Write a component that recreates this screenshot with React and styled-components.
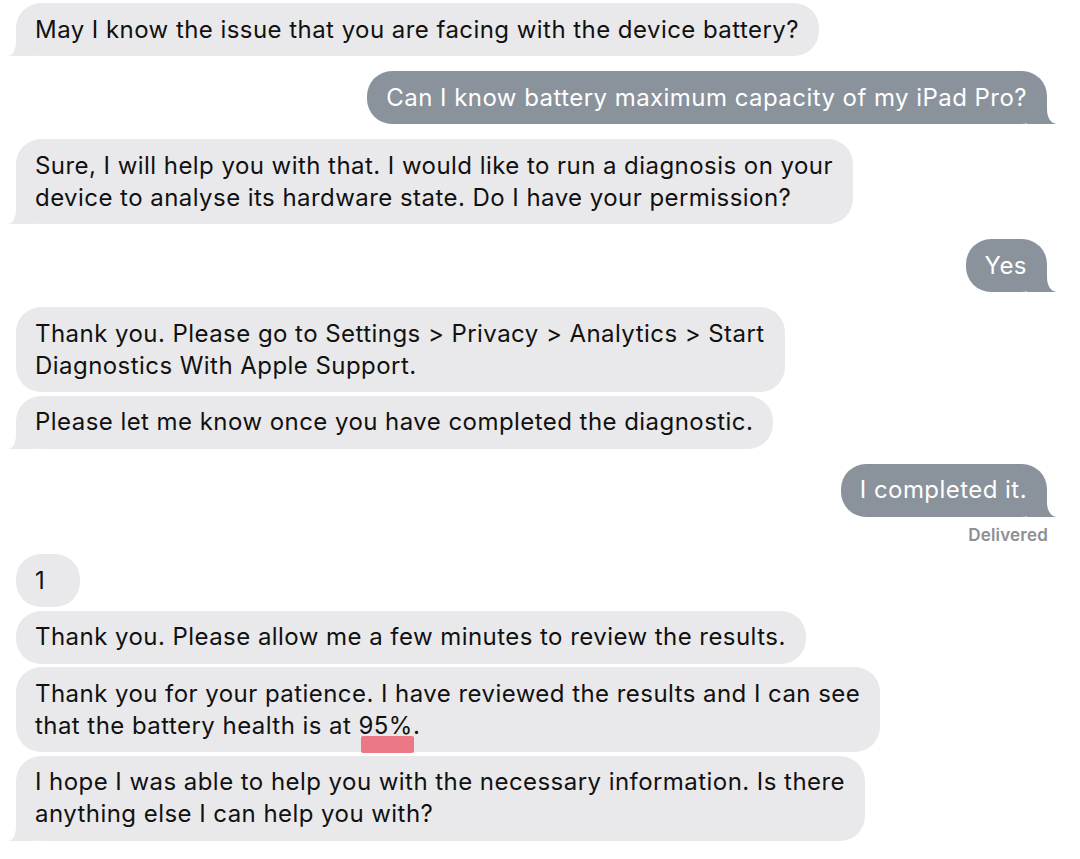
import React from "react";
import styled, { createGlobalStyle } from "styled-components";

const GlobalStyle = createGlobalStyle`
  html, body {
    margin: 0;
    padding: 0;
    background: #ffffff;
  }
  body {
    font-family: Inter, "Liberation Sans", Arial, sans-serif;
    -webkit-font-smoothing: antialiased;
  }
`;

const thread = [
  {
    from: "them",
    messages: [["May I know the issue that you are facing with the device battery?"]],
  },
  {
    from: "me",
    messages: [["Can I know battery maximum capacity of my iPad Pro?"]],
  },
  {
    from: "them",
    messages: [
      [
        "Sure, I will help you with that. I would like to run a diagnosis on your",
        "device to analyse its hardware state. Do I have your permission?",
      ],
    ],
  },
  { from: "me", messages: [["Yes"]] },
  {
    from: "them",
    messages: [
      [
        "Thank you. Please go to Settings > Privacy > Analytics > Start",
        "Diagnostics With Apple Support.",
      ],
      ["Please let me know once you have completed the diagnostic."],
    ],
  },
  { from: "me", messages: [["I completed it."]], status: "Delivered" },
  {
    from: "them",
    messages: [
      ["1"],
      ["Thank you. Please allow me a few minutes to review the results."],
      [
        "Thank you for your patience. I have reviewed the results and I can see",
        "that the battery health is at {95%}.",
      ],
      [
        "I hope I was able to help you with the necessary information. Is there",
        "anything else I can help you with?",
      ],
    ],
  },
];

const Tail = ({ side }) =>
  side === "me" ? (
    <TailSvg side={side} width="30" height="26" viewBox="0 0 30 26">
      <path d="M20 0 H0 V26 H30 C24 25.5 20 20 20 11 Z" />
    </TailSvg>
  ) : (
    <TailSvg side={side} width="28" height="26" viewBox="0 0 28 26">
      <path d="M8 0 H28 V26 H0 C5 25.5 8 20 8 11 Z" />
    </TailSvg>
  );

const renderLine = (line) => {
  const match = line.match(/^(.*)\{(.*)\}(.*)$/);
  if (!match) return line;
  return (
    <>
      {match[1]}
      <Marked>{match[2]}</Marked>
      {match[3]}
    </>
  );
};

const App = () => (
  <>
    <GlobalStyle />
    <Thread>
      {thread.map((group, gi) => (
        <Group key={gi} side={group.from}>
          {group.messages.map((lines, mi) => (
            <Bubble key={mi} side={group.from}>
              {lines.map((line, li) => (
                <Line key={li}>{renderLine(line)}</Line>
              ))}
              {mi === group.messages.length - 1 && <Tail side={group.from} />}
            </Bubble>
          ))}
          {group.status && <Status>{group.status}</Status>}
        </Group>
      ))}
    </Thread>
  </>
);

const Thread = styled.div`
  display: flex;
  flex-direction: column;
  gap: 15px;
  padding: 3px 33px 20px 16px;
  width: 1080px;
  box-sizing: border-box;
`;

const Group = styled.div`
  display: flex;
  flex-direction: column;
  gap: 3.5px;
  align-items: ${({ side }) => (side === "me" ? "flex-end" : "flex-start")};
`;

const Bubble = styled.div`
  position: relative;
  min-width: 25px;
  padding: 10.5px 20px 10.5px 19px;
  border-radius: 25px;
  font-size: 24px;
  letter-spacing: 0.45px;
  line-height: 32px;
  background: ${({ side }) => (side === "me" ? "#8a929c" : "#e9e9eb")};
  color: ${({ side }) => (side === "me" ? "#ffffff" : "#111111")};
`;

const Line = styled.div`
  position: relative;
  z-index: 1;
  white-space: nowrap;
`;

const TailSvg = styled.svg`
  position: absolute;
  bottom: 0;
  ${({ side }) => (side === "me" ? "right: -10px;" : "left: -8px;")}
  fill: ${({ side }) => (side === "me" ? "#8a929c" : "#e9e9eb")};
`;

const Marked = styled.span`
  position: relative;
  &::after {
    content: "";
    position: absolute;
    left: 2px;
    right: -1px;
    bottom: -13px;
    height: 17px;
    background: rgba(236, 104, 118, 0.88);
    border-radius: 2px;
  }
`;

const Status = styled.div`
  margin: 5px -1px -6px 0;
  font-size: 17px;
  font-weight: 600;
  letter-spacing: 0.2px;
  color: #8e8e93;
  line-height: 20px;
`;

export default App;
